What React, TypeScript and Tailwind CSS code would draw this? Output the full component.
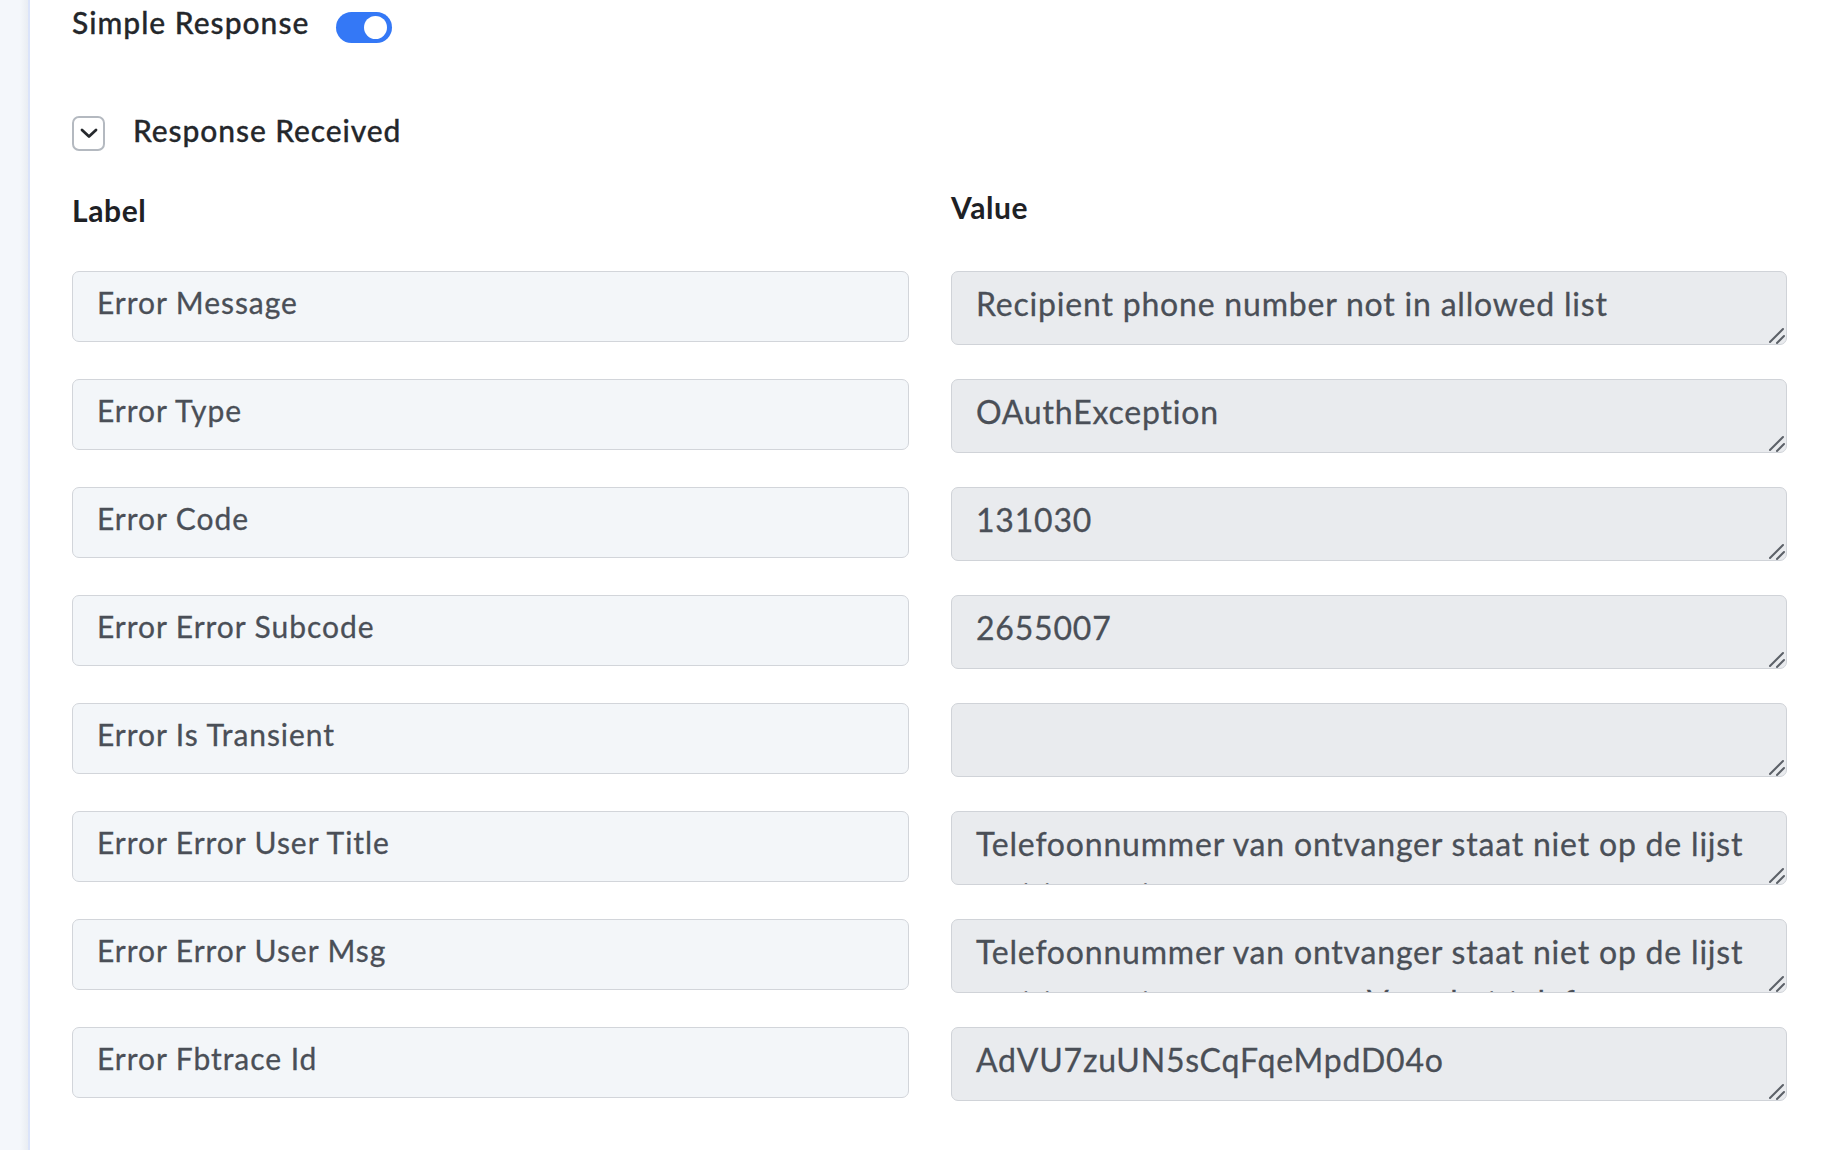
import React from "react";

const rows: { label: string; value: string }[] = [
  { label: "Error Message", value: "Recipient phone number not in allowed list" },
  { label: "Error Type", value: "OAuthException" },
  { label: "Error Code", value: "131030" },
  { label: "Error Error Subcode", value: "2655007" },
  { label: "Error Is Transient", value: "" },
  {
    label: "Error Error User Title",
    value: "Telefoonnummer van ontvanger staat niet op de lijst met toegestane nummers",
  },
  {
    label: "Error Error User Msg",
    value:
      "Telefoonnummer van ontvanger staat niet op de lijst met toegestane nummers. Voeg het telefoonnummer van de ontvanger toe aan de lijst en probeer het opnieuw.",
  },
  { label: "Error Fbtrace Id", value: "AdVU7zuUN5sCqFqeMpdD04o" },
];

function Grip() {
  return (
    <svg
      className="pointer-events-none absolute bottom-0 right-0"
      width="20"
      height="20"
      viewBox="0 0 20 20"
      fill="none"
    >
      <path d="M3 17 L16 4" stroke="#5c6168" strokeWidth="2" strokeLinecap="round" />
      <path d="M10 18 L17 11" stroke="#5c6168" strokeWidth="2" strokeLinecap="round" />
    </svg>
  );
}

export default function App() {
  return (
    <div className="flex min-h-[1150px] w-[1840px] bg-white font-['Lato',sans-serif]">
      {/* sidebar strip */}
      <div className="flex w-[30px] shrink-0">
        <div className="w-[20px] bg-[#f4f7fb]" />
        <div className="w-[8px] bg-gradient-to-r from-[#f4f7fb] to-[#e9edf2]" />
        <div className="w-[2px] bg-[#dbe4fa]" />
      </div>

      <div className="flex flex-1 flex-col pl-[42px] pr-[53px] pt-[4px]">
        {/* Simple Response */}
        <div className="flex items-start gap-[27px]">
          <span className="text-[30px] leading-[36px] font-medium tracking-[1px] text-[#24272b] [-webkit-text-stroke:0.3px_#24272b]">Simple Response</span>
          <div className="mt-[8px] flex h-[31px] w-[56px] items-center justify-end rounded-full bg-[#3478f6] pr-[5px]">
            <div className="h-[23px] w-[23px] rounded-full bg-white" />
          </div>
        </div>

        {/* Response Received */}
        <div className="mt-[69px] flex items-start gap-[28px]">
          <div className="mt-[4px] flex h-[35px] w-[33px] items-center justify-center rounded-[7px] border-2 border-[#b4b9c0]">
            <svg width="18" height="11" viewBox="0 0 18 11" fill="none">
              <path d="M2 2 L9 8.5 L16 2" stroke="#26292d" strokeWidth="2.8" strokeLinecap="round" strokeLinejoin="round" />
            </svg>
          </div>
          <span className="text-[30px] leading-[36px] font-medium tracking-[0.9px] text-[#24272b] [-webkit-text-stroke:0.3px_#24272b]">Response Received</span>
        </div>

        {/* headers */}
        <div className="mt-[38px] flex gap-[42px]">
          <div className="w-[837px] pt-[3px]">
            <span className="text-[30px] leading-[36px] font-bold tracking-[0.6px] text-[#1e2125]">Label</span>
          </div>
          <div className="flex-1">
            <span className="text-[30px] leading-[36px] font-bold tracking-[0.6px] text-[#1e2125]">Value</span>
          </div>
        </div>

        {/* rows */}
        <div className="mt-[43px] flex flex-col gap-[34px]">
          {rows.map((r) => (
            <div key={r.label} className="flex items-start gap-[42px]">
              <div className="h-[71px] w-[837px] shrink-0 rounded-[7px] border border-[#d2d5da] bg-[#f3f6f9] pl-[24px] pt-[12px] text-[30px] leading-[36px] tracking-[0.95px] text-[#4a4f57] [-webkit-text-stroke:0.3px_#4a4f57]">
                {r.label}
              </div>
              <div className="relative h-[74px] flex-1">
                <textarea
                  readOnly
                  value={r.value}
                  className="block h-[74px] w-full resize-none overflow-hidden rounded-[7px] border border-[#d0d3d8] bg-[#e9ebee] pl-[24px] pr-[20px] pt-[7px] text-[32px] leading-[50px] tracking-[0.8px] text-[#4a4f57] outline-none font-['Lato',sans-serif] [-webkit-text-stroke:0.3px_#4a4f57]"
                />
                <Grip />
              </div>
            </div>
          ))}
        </div>
      </div>
    </div>
  );
}
